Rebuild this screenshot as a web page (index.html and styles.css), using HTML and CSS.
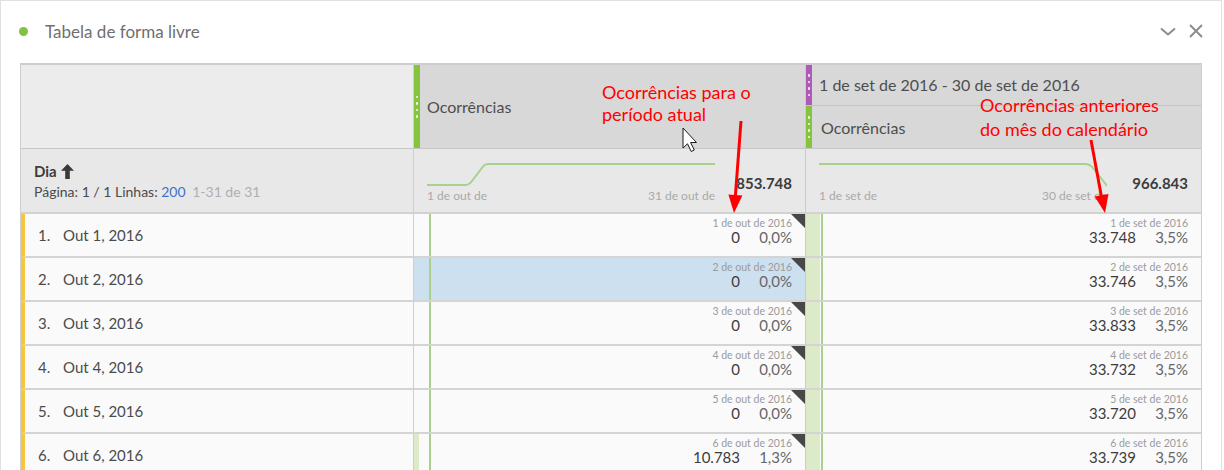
FILE: index.html
```html
<!DOCTYPE html>
<html lang="pt">
<head>
<meta charset="utf-8">
<title>Tabela de forma livre</title>
<link rel="stylesheet" href="styles.css">
</head>
<body>
<div class="panel">
  <div class="titlebar">
    <span class="dot"></span>
    <span class="title">Tabela de forma livre</span>
    <span class="spacer"></span>
    <svg class="ic-chev" width="16" height="9" viewBox="0 0 16 9"><polyline points="1,1.5 8,7.5 15,1.5" fill="none" stroke="#8c8c8c" stroke-width="2"/></svg>
    <svg class="ic-x" width="14" height="14" viewBox="0 0 14 14"><path d="M1 1 L13 13 M13 1 L1 13" stroke="#8c8c8c" stroke-width="2"/></svg>
  </div>

  <div class="table">
    <div class="hdr-left"></div>
    <div class="hdr-col">
      <span class="grip green full"><i></i><i></i><i></i><i></i></span>
      <span class="hdr-text">Ocorrências</span>
    </div>
    <div class="hdr-col split">
      <div class="hdr-sub top">
        <span class="grip purple"><i></i><i></i><i></i><i></i></span>
        <span class="hdr-text">1 de set de 2016 - 30 de set de 2016</span>
      </div>
      <div class="hdr-sub bottom">
        <span class="grip green"><i></i><i></i><i></i><i></i></span>
        <span class="hdr-text">Ocorrências</span>
      </div>
    </div>

    <div class="sum-left">
      <div class="dim">Dia
        <svg class="ic-up" width="13" height="15" viewBox="0 0 13 15"><path d="M6.5 0 L13 6.8 H8.8 V15 H4.2 V6.8 H0 Z" fill="#3a3a3a"/></svg>
      </div>
      <div class="paging">Página: 1 / 1 Linhas: <span class="link">200</span> <span class="muted">1-31 de 31</span></div>
    </div>
    <div class="sum-col">
      <div class="spark">
        <svg width="288" height="30" viewBox="0 0 288 30"><path d="M0 26 H38 Q42 26 45 22 L56 7.5 Q58 5 61 5 H288" fill="none" stroke="#a9d08d" stroke-width="2"/></svg>
        <div class="axis"><span>1 de out de</span><span>31 de out de</span></div>
      </div>
      <div class="total">853.748</div>
    </div>
    <div class="sum-col c2">
      <div class="spark">
        <svg width="288" height="30" viewBox="0 0 288 30"><path d="M0 5 H266 Q271 5 274 9 L288 27" fill="none" stroke="#a9d08d" stroke-width="2"/></svg>
        <div class="axis"><span>1 de set de</span><span>30 de set de</span></div>
      </div>
      <div class="total">966.843</div>
    </div>

    <!-- row 1 -->
    <div class="rl"><span class="rn">1.</span>Out 1, 2016</div>
    <div class="cell c1"><span class="bar" ><span class="fill" style="width:0px"></span></span><div class="val"><div class="lbl">1 de out de 2016</div><div class="nums"><span class="n">0</span><span class="p">0,0%</span></div></div><span class="tri"></span></div>
    <div class="cell c2"><span class="bar"><span class="fill" style="width:14px"></span></span><div class="val"><div class="lbl">1 de set de 2016</div><div class="nums"><span class="n">33.748</span><span class="p">3,5%</span></div></div></div>
    <!-- row 2 -->
    <div class="rl"><span class="rn">2.</span>Out 2, 2016</div>
    <div class="cell c1 sel"><span class="bar"><span class="fill" style="width:0px"></span></span><div class="val"><div class="lbl">2 de out de 2016</div><div class="nums"><span class="n">0</span><span class="p">0,0%</span></div></div><span class="tri"></span></div>
    <div class="cell c2"><span class="bar"><span class="fill" style="width:14px"></span></span><div class="val"><div class="lbl">2 de set de 2016</div><div class="nums"><span class="n">33.746</span><span class="p">3,5%</span></div></div></div>
    <!-- row 3 -->
    <div class="rl"><span class="rn">3.</span>Out 3, 2016</div>
    <div class="cell c1"><span class="bar"><span class="fill" style="width:0px"></span></span><div class="val"><div class="lbl">3 de out de 2016</div><div class="nums"><span class="n">0</span><span class="p">0,0%</span></div></div><span class="tri"></span></div>
    <div class="cell c2"><span class="bar"><span class="fill" style="width:14px"></span></span><div class="val"><div class="lbl">3 de set de 2016</div><div class="nums"><span class="n">33.833</span><span class="p">3,5%</span></div></div></div>
    <!-- row 4 -->
    <div class="rl"><span class="rn">4.</span>Out 4, 2016</div>
    <div class="cell c1"><span class="bar"><span class="fill" style="width:0px"></span></span><div class="val"><div class="lbl">4 de out de 2016</div><div class="nums"><span class="n">0</span><span class="p">0,0%</span></div></div><span class="tri"></span></div>
    <div class="cell c2"><span class="bar"><span class="fill" style="width:14px"></span></span><div class="val"><div class="lbl">4 de set de 2016</div><div class="nums"><span class="n">33.732</span><span class="p">3,5%</span></div></div></div>
    <!-- row 5 -->
    <div class="rl"><span class="rn">5.</span>Out 5, 2016</div>
    <div class="cell c1"><span class="bar"><span class="fill" style="width:0px"></span></span><div class="val"><div class="lbl">5 de out de 2016</div><div class="nums"><span class="n">0</span><span class="p">0,0%</span></div></div><span class="tri"></span></div>
    <div class="cell c2"><span class="bar"><span class="fill" style="width:14px"></span></span><div class="val"><div class="lbl">5 de set de 2016</div><div class="nums"><span class="n">33.720</span><span class="p">3,5%</span></div></div></div>
    <!-- row 6 -->
    <div class="rl"><span class="rn">6.</span>Out 6, 2016</div>
    <div class="cell c1"><span class="bar"><span class="fill" style="width:5px"></span></span><div class="val"><div class="lbl">6 de out de 2016</div><div class="nums"><span class="n">10.783</span><span class="p">1,3%</span></div></div><span class="tri"></span></div>
    <div class="cell c2"><span class="bar"><span class="fill" style="width:14px"></span></span><div class="val"><div class="lbl">6 de set de 2016</div><div class="nums"><span class="n">33.739</span><span class="p">3,5%</span></div></div></div>
  </div>

  <div class="note n1"><div>Ocorrências para o</div><div>período atual</div></div>
  <div class="note n2"><div>Ocorrências anteriores</div><div>do mês do calendário</div></div>
  <svg class="overlay" width="1224" height="470" viewBox="0 0 1224 470">
    <line x1="741" y1="121" x2="735.3" y2="197" stroke="#ff0000" stroke-width="3"/>
    <polygon points="734,213 742.4,195.6 728.4,194.6" fill="#ff0000"/>
    <line x1="1091" y1="140" x2="1101.5" y2="197" stroke="#ff0000" stroke-width="3"/>
    <polygon points="1105,213 1108.5,194 1094.7,196.6" fill="#ff0000"/>
    <path d="M683 128 V148 L687.5 143.8 L691.2 151.5 L694.3 150 L690.6 142.5 H696.5 Z" fill="#ffffff" stroke="#1a1a1a" stroke-width="1" stroke-linejoin="round"/>
  </svg>
</div>
</body>
</html>
```

FILE: styles.css
```css
* { box-sizing: border-box; margin: 0; padding: 0; }
html, body { width: 1224px; height: 470px; overflow: hidden; }
body { background: #ffffff; font-family: Lato, "Open Sans", sans-serif; color: #4b4b4b; }

.panel {
  position: relative;
  width: 1222px;
  height: 470px;
  border: 1px solid #e0e0e0;
  border-bottom: none;
  overflow: hidden;
}

.titlebar {
  height: 62px;
  display: flex;
  align-items: center;
  padding: 0 18px 2px 18px;
}
.dot { width: 9px; height: 9px; border-radius: 50%; background: #84c042; margin-right: 17px; }
.title { font-size: 17px; color: #6f6f6f; }
.spacer { flex: 1; }
.ic-chev { margin-right: 13px; margin-top: 1px; }

.table {
  margin-left: 19px;
  width: 1182px;
  display: grid;
  grid-template-columns: 393px 392px 395px;
  grid-template-rows: 84px 65px repeat(6, 44px);
  border-top: 2px solid #cdcdcd;
  border-left: 1px solid #cfcfcf;
  border-right: 1px solid #cfcfcf;
}

/* header */
.hdr-left { background: #ececec; border-right: 1px solid #cfcfcf; border-bottom: 1px solid #c6c6c6; }
.hdr-col {
  background: #d8d8d8;
  border-right: 1px solid #cbcbcb;
  border-bottom: 1px solid #c6c6c6;
  display: flex;
  align-items: center;
}
.hdr-col.split { flex-direction: column; align-items: stretch; border-right: none; }
.hdr-sub { display: flex; align-items: center; }
.hdr-sub.top { height: 41px; border-bottom: 1px solid #c4c4c4; }
.hdr-sub.bottom { flex: 1; }
.hdr-text { font-size: 16px; line-height: 16px; color: #4e4e4e; }
.hdr-col > .hdr-text { margin-left: 7px; margin-top: 1px; }
.hdr-sub .hdr-text { margin-left: 7px; }
.hdr-sub.top .hdr-text { margin-top: 0px; }
.hdr-sub.bottom .hdr-text { margin-left: 9px; margin-top: 1px; }

.grip {
  width: 6px;
  align-self: stretch;
  display: flex;
  flex-direction: column;
  align-items: center;
  justify-content: center;
  gap: 4px;
}
.grip i { display: block; width: 2.5px; height: 2.5px; border-radius: 50%; background: #ffffff; opacity: 0.9; }
.grip.green { background: #86c440; }
.grip.purple { background: #b05ab8; }

/* summary */
.sum-left {
  background: #e8e8e8;
  border-right: 1px solid #cfcfcf;
  border-bottom: 2px solid #d2d2d2;
  padding: 12px 0 0 13px;
}
.dim { font-size: 15px; font-weight: 700; color: #3e3e3e; line-height: 20px; display: flex; align-items: center; gap: 4px; }
.paging { font-size: 14px; line-height: 20px; color: #4b4b4b; margin-top: 1px; }
.link { color: #3b73c8; }
.muted { color: #b0b0b0; margin-left: 3px; }

.sum-col {
  background: #e8e8e8;
  border-right: 1px solid #cbcbcb;
  border-bottom: 2px solid #d2d2d2;
  display: flex;
  align-items: flex-start;
  padding: 10px 13px 0 13px;
}
.sum-col.c2 { border-right: none; }
.spark { width: 288px; }
.spark svg { display: block; }
.axis { display: flex; justify-content: space-between; font-size: 12px; line-height: 14px; color: #a9a9a9; }
.total { flex: 1; text-align: right; font-size: 15px; font-weight: 700; color: #3c3c3c; margin-top: 15px; }

/* rows */
.rl {
  background: #fafafa;
  border-left: 4px solid #f6c63f;
  border-right: 1px solid #cfcfcf;
  border-bottom: 2px solid #d4d4d4;
  font-size: 15px;
  color: #4b4b4b;
  display: flex;
  align-items: center;
  padding-left: 13px;
  padding-bottom: 1px;
}
.rn { width: 25px; }

.cell {
  position: relative;
  background: #fafafa;
  border-right: 1px solid #cbcbcb;
  border-bottom: 2px solid #d4d4d4;
  display: flex;
}
.cell.c2 { border-right: none; }
.cell.sel { background: #cde0ef; }
.bar {
  width: 17px;
  border-right: 2px solid #a9d08d;
  display: flex;
}
.fill { display: block; height: 100%; background: #dceac9; }
.val { flex: 1; padding-right: 13px; text-align: right; }
.lbl { font-size: 10.5px; line-height: 12px; color: #9b9b9b; margin-top: 3px; }
.nums { display: flex; justify-content: flex-end; font-size: 15px; line-height: 17px; }
.n { color: #3c3c3c; }
.p { width: 52px; color: #666666; }
.tri {
  position: absolute;
  top: 0;
  right: 0;
  width: 0;
  height: 0;
  border-top: 14px solid #474747;
  border-left: 14px solid transparent;
}

/* annotations */
.note {
  position: absolute;
  font-size: 18px;
  line-height: 18px;
  color: #ff0000;
  white-space: nowrap;
  display: flex;
  flex-direction: column;
}
.n1 { left: 601px; top: 82px; gap: 4px; }
.n2 { left: 979px; top: 95px; gap: 6px; }
.overlay { position: absolute; left: -1px; top: -1px; pointer-events: none; }
```
